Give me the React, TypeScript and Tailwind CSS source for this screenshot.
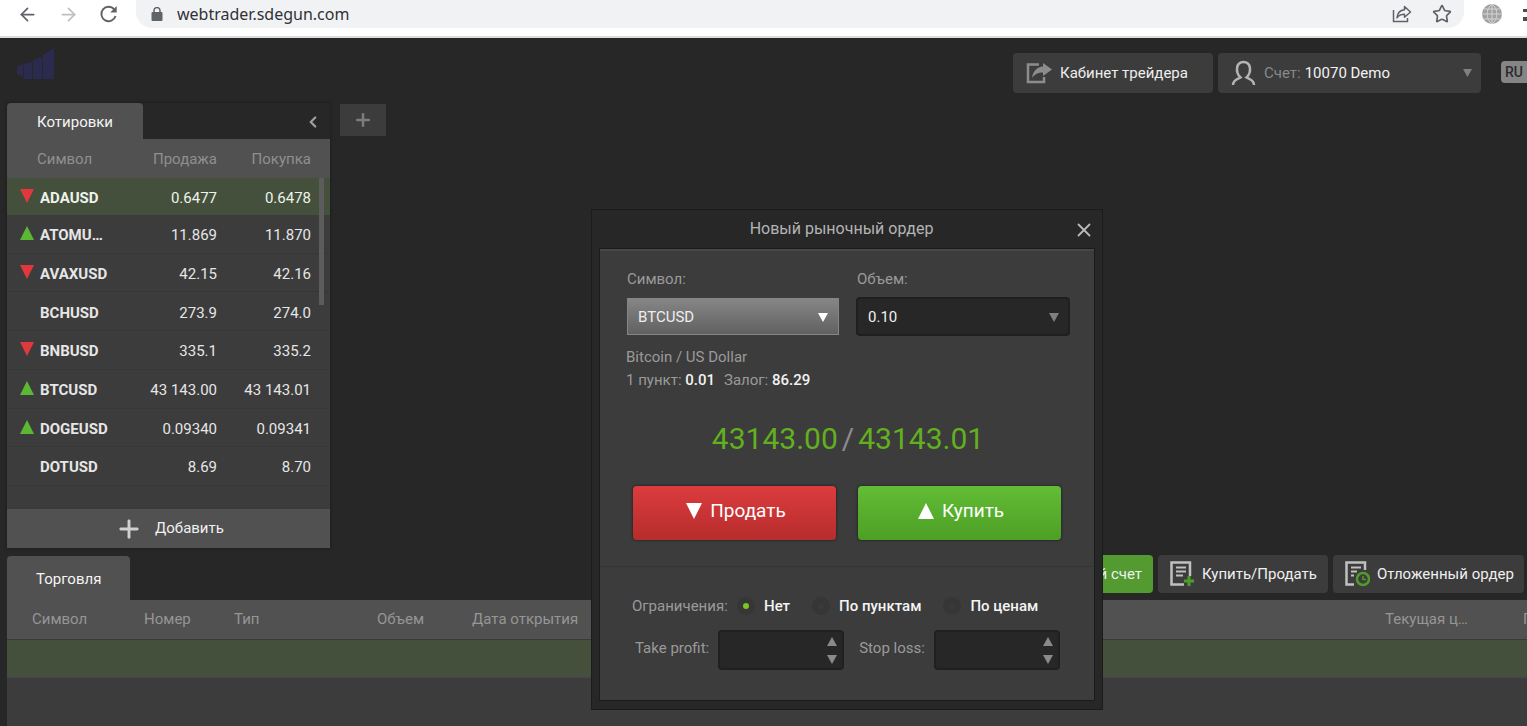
import React, { useState } from 'react';
import { ArrowLeft, ArrowRight, ChevronLeft, Plus, Star, X } from 'lucide-react';

type Direction = 'up' | 'down' | null;

interface Quote {
  symbol: string;
  bid: string;
  ask: string;
  direction: Direction;
}

const QUOTES: Quote[] = [
  { symbol: 'ADAUSD', bid: '0.6477', ask: '0.6478', direction: 'down' },
  { symbol: 'ATOMU…', bid: '11.869', ask: '11.870', direction: 'up' },
  { symbol: 'AVAXUSD', bid: '42.15', ask: '42.16', direction: 'down' },
  { symbol: 'BCHUSD', bid: '273.9', ask: '274.0', direction: null },
  { symbol: 'BNBUSD', bid: '335.1', ask: '335.2', direction: 'down' },
  { symbol: 'BTCUSD', bid: '43 143.00', ask: '43 143.01', direction: 'up' },
  { symbol: 'DOGEUSD', bid: '0.09340', ask: '0.09341', direction: 'up' },
  { symbol: 'DOTUSD', bid: '8.69', ask: '8.70', direction: null },
];

const LIMITS = ['Нет', 'По пунктам', 'По ценам'];

function Triangle({ up = false, className = '' }: { up?: boolean; className?: string }) {
  return (
    <svg viewBox="0 0 14 14" preserveAspectRatio="none" className={className} aria-hidden="true">
      <path d={up ? 'M7 0 14 14H0Z' : 'M0 0H14L7 14Z'} fill="currentColor" />
    </svg>
  );
}

function BrowserBar() {
  return (
    <div className="flex h-[38px] shrink-0 items-start overflow-hidden border-b-2 border-[#dcdcdc] bg-white text-[#5f6368]">
      <div className="flex h-7 w-[136px] shrink-0 items-center gap-5 pl-[17px]">
        <button type="button" aria-label="Назад">
          <ArrowLeft size={21} strokeWidth={2} />
        </button>
        <button type="button" aria-label="Вперед" className="text-[#bdbfc2]">
          <ArrowRight size={21} strokeWidth={2} />
        </button>
        <button type="button" aria-label="Обновить">
          <svg width="19" height="20" viewBox="0 0 20 20" fill="none" aria-hidden="true">
            <path d="M16 5.2A7.6 7.6 0 1 0 17.4 12" stroke="currentColor" strokeWidth="2" />
            <path d="M18.6 1.6V8.4H11.8Z" fill="currentColor" />
          </svg>
        </button>
      </div>
      <div className="flex h-7 flex-1 items-center rounded-b-2xl bg-[#f1f2f4] pr-3 pl-[15px]">
        <svg width="12" height="14" viewBox="0 0 12 14" fill="none" aria-hidden="true">
          <rect x="0.5" y="5" width="11" height="9" rx="1" fill="#5f6368" />
          <path d="M3 6V3.6a3 3 0 0 1 6 0V6" stroke="#5f6368" strokeWidth="1.5" />
        </svg>
        <input
          aria-label="Адрес"
          defaultValue="webtrader.sdegun.com"
          className="ml-[14px] flex-1 bg-transparent font-['Noto_Sans',sans-serif] text-[16px] leading-6 text-[#303134] outline-none"
        />
        <button type="button" aria-label="Поделиться">
          <svg width="20" height="18" viewBox="0 0 20 18" fill="none" stroke="currentColor" strokeWidth="1.5" aria-hidden="true">
            <path d="M1.5 5V16.5H15.5V13" />
            <path d="M12.5 1.5 18.5 7 12.5 12.2V9.2C9 9.2 6.8 10.2 5 12.8 5.4 8.4 8 5.2 12.5 4.7Z" strokeLinejoin="round" />
          </svg>
        </button>
        <button type="button" aria-label="Закладка" className="ml-5">
          <Star size={20} />
        </button>
      </div>
      <div className="flex h-7 w-[63px] shrink-0 items-center pl-[18px]">
        <svg width="20" height="20" viewBox="0 0 20 20" className="shrink-0" aria-hidden="true">
          <circle cx="10" cy="10" r="10" fill="#a2a2a2" />
          <path
            d="M10 0V20M0 10H20M2 5H18M2 15H18M10 0C3.5 5 3.5 15 10 20M10 0C16.5 5 16.5 15 10 20"
            stroke="#d4d4d4"
            fill="none"
          />
        </svg>
        <svg width="20" height="20" viewBox="0 0 20 20" className="ml-[21px] shrink-0 text-[#4a4d51]" aria-hidden="true">
          <path d="M0 5H8V8H0ZM0 13H8V17H0Z" fill="currentColor" />
        </svg>
      </div>
    </div>
  );
}

function Logo() {
  return (
    <svg width="37" height="32" viewBox="0 0 37 32" aria-label="Логотип" role="img">
      <path d="M0 19 6 16V29L0 26ZM7 16 15 14V31H7ZM16 12 25 9V31H16ZM26 7 37 0V31H26Z" fill="#2a2b4f" />
    </svg>
  );
}

function Header() {
  return (
    <header className="flex h-[64px] shrink-0 items-start pl-[17px]">
      <div className="pt-[10px]">
        <Logo />
      </div>
      <div className="ml-auto flex items-center gap-[5px] pt-[15px]">
        <a
          href="#cabinet"
          className="flex h-10 w-[200px] items-center gap-2 rounded-sm bg-[#3c3c3c] pl-[13px] text-[15px] text-[#eeeeee]"
        >
          <svg width="26" height="22" viewBox="0 0 26 22" aria-hidden="true">
            <path d="M13 2.5H2V20H18V15" stroke="#8c8c8c" strokeWidth="2.5" fill="none" />
            <path d="M17 1 26 7.5 17 14V10.5C12 10.5 9 12 6 16 7 9 11 5 17 4.5Z" fill="#8c8c8c" />
          </svg>
          Кабинет трейдера
        </a>
        <button
          type="button"
          className="flex h-10 w-[263px] items-center rounded-sm bg-[#3c3c3c] pr-[9px] pl-[13px] text-[15px] text-[#f2f2f2]"
        >
          <svg width="25" height="26" viewBox="0 0 25 26" fill="none" stroke="#b4b4b4" strokeWidth="2.5" className="mr-2" aria-hidden="true">
            <path d="M2 25C2 20 6 19.5 9.5 17.5 4 12 5 2 12.5 2S21 12 15.5 17.5C19 19.5 23 20 23 25" />
          </svg>
          <span className="mr-1 text-[#888888]">Счет:</span>
          10070 Demo
          <Triangle className="ml-auto h-2 w-[9px] text-[#808080]" />
        </button>
      </div>
      <button
        type="button"
        className="mt-[23px] ml-5 h-[22px] w-[26px] rounded-l-sm bg-[#858585] pl-1 text-left text-[14px] leading-[22px] font-medium text-[#2c2c2c]"
      >
        RU
      </button>
    </header>
  );
}

function QuotesPanel() {
  return (
    <section className="flex w-[323px] flex-col text-[15px] shadow-[0_0_3px_#1a1a1a]">
      <div className="flex h-9 items-center justify-between pr-2">
        <h2 className="flex h-full w-[136px] items-center rounded-t-sm bg-[#515151] pt-[2px] pl-[30px] text-[#f4f4f4]">
          Котировки
        </h2>
        <button type="button" aria-label="Свернуть" className="pt-[2px]">
          <ChevronLeft size={18} strokeWidth={3} className="text-[#a0a0a0]" />
        </button>
      </div>
      <div className="relative h-[370px] bg-[#3c3c3c]">
        <table className="h-[347px] w-full table-fixed border-collapse">
          <thead>
            <tr className="h-[39px] bg-[#515151] text-[#8f8f8f]">
              <th className="w-[120px] pt-[2px] pl-[30px] text-left font-normal">Символ</th>
              <th className="w-[90px] pt-[2px] text-right font-normal">Продажа</th>
              <th className="pt-[2px] pr-[19px] text-right font-normal">Покупка</th>
            </tr>
          </thead>
          <tbody>
            {QUOTES.map((quote, idx) => (
              <tr
                key={quote.symbol}
                className={idx === 0 ? 'bg-[#44503c] text-[#eef3ea]' : 'border-b border-[#373737] text-[#e6e6e6]'}
              >
                <td className="pt-[3px] pl-[13px]">
                  <div className="flex items-center gap-[6px] font-bold">
                    <span className="w-[14px] pb-1">
                      {quote.direction === 'up' && <Triangle up className="h-[14px] w-[14px] text-[#5cb832]" />}
                      {quote.direction === 'down' && <Triangle className="h-[14px] w-[14px] text-[#e0383c]" />}
                    </span>
                    {quote.symbol}
                  </div>
                </td>
                <td className="pt-[3px] text-right">{quote.bid}</td>
                <td className="pt-[3px] pr-[19px] text-right">{quote.ask}</td>
              </tr>
            ))}
          </tbody>
        </table>
        {/* Scroll thumb */}
        <div className="absolute top-[39px] right-[6px] h-[127px] w-[5px] bg-[#5c5c5c]" />
      </div>
      <button
        type="button"
        className="flex h-[39px] items-center gap-3 bg-[#515151] pl-[108px] text-[#f0f0f0]"
      >
        <Plus size={28} strokeWidth={2.5} className="text-[#d0d0d0]" />
        Добавить
      </button>
    </section>
  );
}

function Toolbar() {
  return (
    <div className="flex items-start gap-[5px] pr-[3px] text-[15px] text-[#f0f0f0]">
      <button type="button" className="h-[38px] rounded-sm bg-[#539a31] px-[11px]">
        Реальный счет
      </button>
      <button type="button" className="flex h-[38px] w-[170px] items-center gap-[7px] rounded-sm bg-[#3c3c3c] pl-3">
        <svg width="25" height="26" viewBox="0 0 25 26" fill="none" aria-hidden="true">
          <path d="M14 23.5H1.5V1.5H20V15" stroke="#c0c0c0" strokeWidth="2.5" />
          <path d="M6 6.5H16M6 10.5H16M6 14.5H13" stroke="#c0c0c0" strokeWidth="2" />
          <path d="M19 15V25M14 20H24" stroke="#4f9c2b" strokeWidth="3" />
        </svg>
        Купить/Продать
      </button>
      <button type="button" className="flex h-[38px] w-[191px] items-center gap-[7px] rounded-sm bg-[#3c3c3c] pl-3">
        <svg width="25" height="26" viewBox="0 0 25 26" fill="none" aria-hidden="true">
          <path d="M9 23.5H1.5V1.5H20V9" stroke="#c0c0c0" strokeWidth="2.5" />
          <path d="M6 6.5H16M6 10.5H12M6 14.5H9" stroke="#c0c0c0" strokeWidth="2" />
          <circle cx="18" cy="18" r="6" stroke="#4f9c2b" strokeWidth="2.5" />
          <path d="M18 15V18.5H21" stroke="#4f9c2b" strokeWidth="1.5" />
        </svg>
        Отложенный ордер
      </button>
    </div>
  );
}

function TradePanel() {
  return (
    <section className="flex flex-1 flex-col pl-[7px] text-[15px]">
      <div className="flex h-[45px] items-start justify-between">
        <h2 className="mt-px flex h-[44px] w-[123px] items-center rounded-t-sm bg-[#515151] pt-[2px] pl-[29px] text-[#f4f4f4]">
          Торговля
        </h2>
        <Toolbar />
      </div>
      <div className="flex-1 overflow-hidden bg-[#3c3c3c]">
        <table className="w-full table-fixed border-collapse">
          <thead>
            <tr className="h-[39px] border-b border-[#3a3a3a] bg-[#515151] text-left text-[#969696]">
              <th className="w-[137px] pl-[25px] font-normal">Символ</th>
              <th className="w-[90px] font-normal">Номер</th>
              <th className="w-[143px] font-normal">Тип</th>
              <th className="w-[95px] font-normal">Объем</th>
              <th className="font-normal">Дата открытия</th>
              <th className="w-[138px] font-normal">Текущая ц…</th>
              <th className="w-1 overflow-hidden font-normal">П</th>
            </tr>
          </thead>
          <tbody>
            <tr className="h-[38px] border-b-2 border-[#484848] bg-[#44503c]">
              <td colSpan={7} />
            </tr>
          </tbody>
        </table>
      </div>
    </section>
  );
}

function StopField({ id, label }: { id: string; label: string }) {
  return (
    <div className="flex items-center gap-[9px]">
      <label htmlFor={id} className="pb-1 text-[#9a9a9a]">
        {label}
      </label>
      <div className="flex h-10 w-[126px] items-center rounded-sm border-2 border-[#202020] bg-[#272727] pr-[5px]">
        <input id={id} className="h-full w-0 flex-1 bg-transparent px-2 text-white outline-none" />
        <div className="flex flex-col gap-[9px] text-[#8a8a8a]">
          <button type="button" aria-label="Больше">
            <Triangle up className="h-[9px] w-[10px]" />
          </button>
          <button type="button" aria-label="Меньше">
            <Triangle className="h-[9px] w-[10px]" />
          </button>
        </div>
      </div>
    </div>
  );
}

function OrderDialog() {
  const [limit, setLimit] = useState(LIMITS[0]);

  return (
    <div
      role="dialog"
      aria-labelledby="order-title"
      className="absolute top-[209px] left-[591px] w-[512px] border border-[#1b1b1b] bg-[#272727] px-[7px] pb-2 text-[15px] text-[#9a9a9a]"
    >
      <div className="flex h-[38px] items-center pl-[11px]">
        <h2 id="order-title" className="flex-1 text-center text-[16px] text-[#b4b4b4]">
          Новый рыночный ордер
        </h2>
        <button type="button" aria-label="Закрыть" className="pt-[2px]">
          <X size={22} strokeWidth={2} className="text-[#b8b8b8]" />
        </button>
      </div>

      <div className="border border-[#1b1b1b] bg-[#3c3c3c] pb-[30px]">
        <div className="border-t-2 border-[#474747] pr-6 pl-[26px]">
          <div className="flex gap-[17px] pt-[18px] pl-px">
            <div className="w-[212px]">
              <label htmlFor="symbol" className="block leading-5">
                Символ:
              </label>
              <div className="relative mt-[9px]">
                <select
                  id="symbol"
                  className="h-[37px] w-full appearance-none border border-[#858585] bg-linear-to-b from-[#868686] to-[#616161] px-[10px] pt-px text-[15px] text-[#eeeeee]"
                >
                  <option>BTCUSD</option>
                </select>
                <Triangle className="pointer-events-none absolute top-[15px] right-[11px] h-[9px] w-[10px] text-white" />
              </div>
            </div>
            <div className="w-[214px]">
              <label htmlFor="volume" className="block pl-px leading-5">
                Объем:
              </label>
              <div className="relative mt-2">
                <select
                  id="volume"
                  className="h-[39px] w-full appearance-none rounded-sm border-2 border-[#1f1f1f] bg-[#272727] px-[10px] pt-px text-[15px] text-[#f0f0f0]"
                >
                  <option>0.10</option>
                </select>
                <Triangle className="pointer-events-none absolute top-4 right-[11px] h-[9px] w-[10px] text-[#808080]" />
              </div>
            </div>
          </div>

          <p className="mt-[10px] leading-[23px]">Bitcoin / US Dollar</p>
          <p className="leading-[23px]">
            1 пункт: <b className="font-medium text-[#f2f2f2]">0.01</b>
            <span className="ml-[9px]">Залог: </span>
            <b className="font-medium text-[#f2f2f2]">86.29</b>
          </p>

          <div className="mt-[27px] flex justify-center gap-1 text-[30px] leading-10 text-[#62b01e]">
            <span>43143.00</span>
            <span className="text-[#8c8c8c]">/</span>
            <span>43143.01</span>
          </div>

          <div className="mt-[27px] flex gap-[22px] pl-[7px] text-[19px] text-white">
            <button
              type="button"
              className="flex h-[54px] w-[203px] items-center justify-center gap-2 rounded-sm bg-linear-to-b from-[#dc3c3e] to-[#b72c2c] pb-1 pl-[3px] shadow-[0_0_3px_#1a1a1a]"
            >
              <Triangle className="h-4 w-4" />
              Продать
            </button>
            <button
              type="button"
              className="flex h-[54px] w-[203px] items-center justify-center gap-2 rounded-sm bg-linear-to-b from-[#62bd35] to-[#4d9f25] pb-1 pl-[3px] shadow-[0_0_3px_#1a1a1a]"
            >
              <Triangle up className="h-4 w-4" />
              Купить
            </button>
          </div>
        </div>

        <div className="mt-[26px] border-t border-[#353535] pl-8">
          <div role="radiogroup" aria-labelledby="limits" className="mt-[27px] flex items-center leading-6">
            <span id="limits" className="w-[105px]">
              Ограничения:
            </span>
            {LIMITS.map((name) => (
              <label key={name} className="mr-[22px] flex items-center gap-[9px] font-medium text-[#f4f4f4]">
                <input
                  type="radio"
                  name="limit"
                  checked={limit === name}
                  onChange={() => setLimit(name)}
                  className="h-[18px] w-[18px] appearance-none rounded-full border-[6px] border-[#363636] bg-[#3a3a3a] checked:bg-[#7ac71f]"
                />
                {name}
              </label>
            ))}
          </div>
          <div className="mt-3 flex gap-[15px] pl-[3px]">
            <StopField id="take-profit" label="Take profit:" />
            <StopField id="stop-loss" label="Stop loss:" />
          </div>
        </div>
      </div>
    </div>
  );
}

export default function App() {
  return (
    <div className="relative flex min-h-screen flex-col overflow-hidden bg-[#272727] font-[Roboto,sans-serif]">
      <BrowserBar />
      <Header />
      <main className="flex flex-1 flex-col gap-[7px]">
        <div className="flex items-start gap-[10px] pt-px pl-[7px]">
          <QuotesPanel />
          <button
            type="button"
            aria-label="Новый график"
            className="mt-px flex h-8 w-[46px] items-center justify-center bg-[#3c3c3c]"
          >
            <Plus size={20} strokeWidth={3} className="text-[#7c7c7c]" />
          </button>
        </div>
        <TradePanel />
      </main>
      <OrderDialog />
    </div>
  );
}
